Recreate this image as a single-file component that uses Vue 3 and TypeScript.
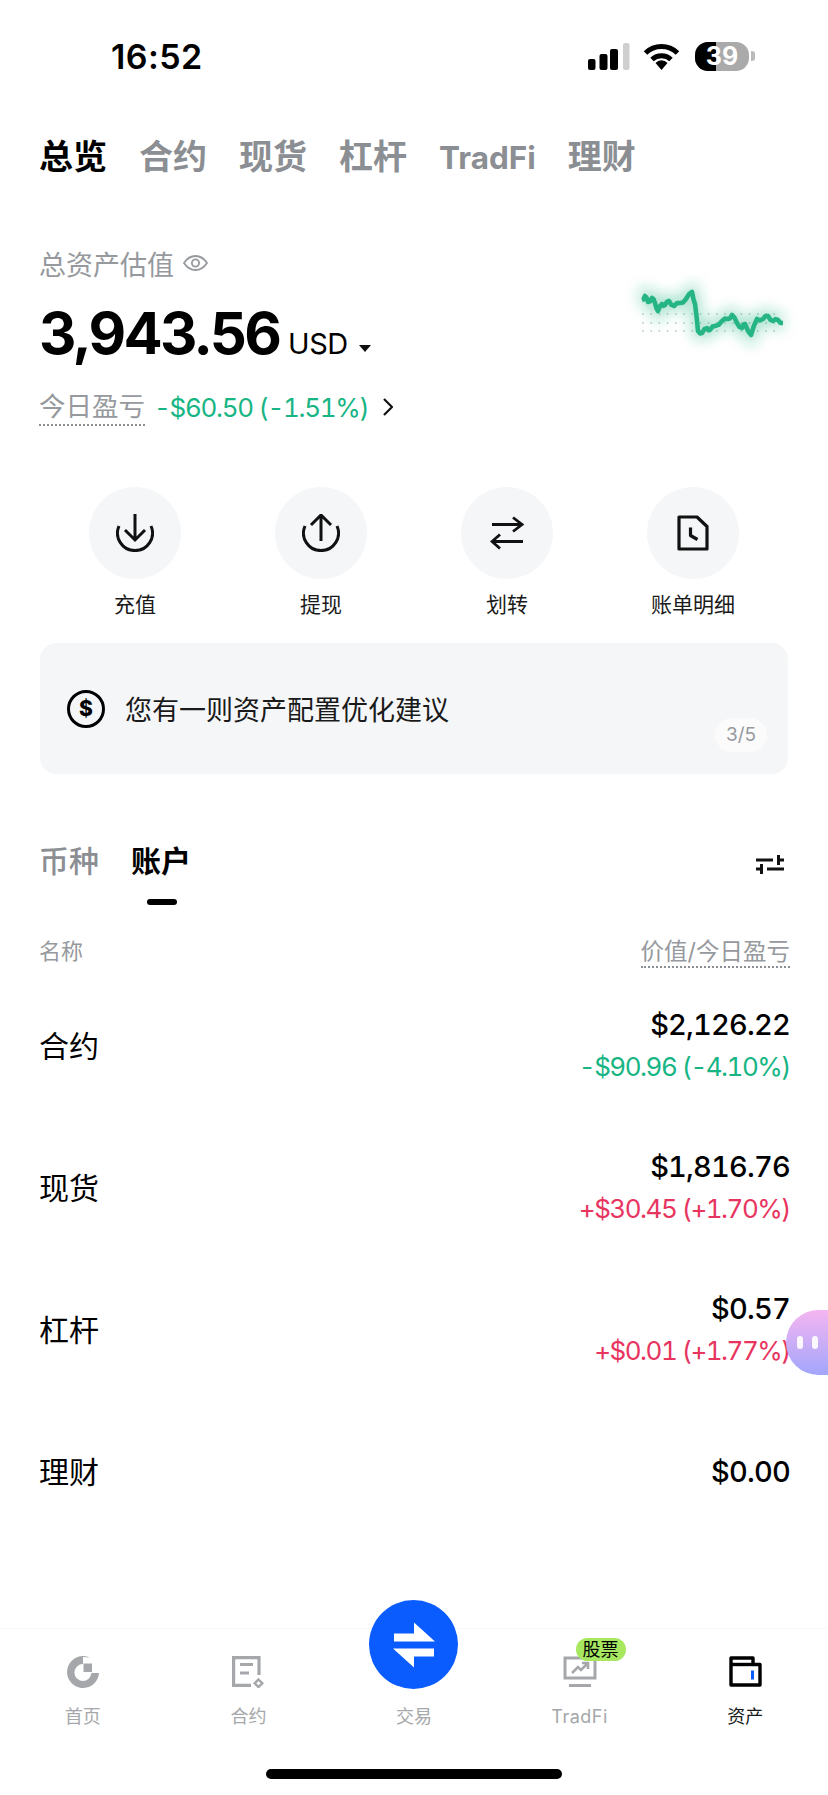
<template>
  <div class="page">
    <!-- 状态栏 -->
    <div class="status-bar">
      <span class="time">16:52</span>
      <div class="status-icons">
        <svg class="signal" width="42" height="27" viewBox="0 0 42 27">
          <rect x="0" y="16" width="7.5" height="11" rx="2" fill="#000" />
          <rect x="11.5" y="11" width="8" height="16" rx="2" fill="#000" />
          <rect x="22" y="6" width="8" height="21" rx="2" fill="#000" />
          <rect x="35" y="0" width="6.5" height="27" rx="2" fill="#cfcfcf" />
        </svg>
        <svg class="wifi" width="37" height="27" viewBox="0 0 37 27">
          <path d="M2.5 10A23 23 0 0 1 34.5 10" fill="none" stroke="#000" stroke-width="5" />
          <path d="M9 16.5A14 14 0 0 1 28 16.5" fill="none" stroke="#000" stroke-width="5" />
          <path d="M18.5 27l-6-7a8 8 0 0 1 12 0z" fill="#000" />
        </svg>
        <div class="battery">
          <div class="battery-body">
            <div class="battery-fill"></div>
            <span class="battery-text">39</span>
          </div>
          <div class="battery-nub"></div>
        </div>
      </div>
    </div>

    <!-- 顶部分类 -->
    <nav class="top-tabs">
      <span
        v-for="(tab, i) in topTabs"
        :key="tab"
        class="top-tab"
        :class="{ 'top-tab--active': i === 0, 'top-tab--latin': tab === 'TradFi' }"
      >{{ tab }}</span>
    </nav>

    <!-- 总资产 -->
    <section class="hero">
      <div class="hero-left">
        <div class="hero-title">
          <span>总资产估值</span>
          <svg width="25" height="16" viewBox="0 0 25 16" fill="none" stroke="#96999d" stroke-width="1.8">
            <path d="M1 8C4 3.4 8 1 12.5 1S21 3.4 24 8C21 12.6 17 15 12.5 15S4 12.6 1 8Z" />
            <circle cx="12.5" cy="8" r="3.6" />
          </svg>
        </div>
        <div class="hero-amount">
          <span class="amount">3,943.56</span>
          <span class="currency">USD</span>
          <i class="caret"></i>
        </div>
        <div class="hero-pnl">
          <span class="pnl-label">今日盈亏</span>
          <span class="pnl-value">-$60.50 (-1.51%)</span>
          <svg width="10" height="18" viewBox="0 0 10 18" fill="none" stroke="#111" stroke-width="2.2">
            <path d="M1 1l8 8-8 8" />
          </svg>
        </div>
      </div>
      <svg class="spark" width="228" height="90" viewBox="0 0 228 90">
        <defs>
          <filter id="glow" x="-30%" y="-60%" width="160%" height="220%">
            <feGaussianBlur stdDeviation="7" />
          </filter>
        </defs>
        <circle v-for="d in sparkDots" :key="d.key" :cx="d.x" :cy="d.y" r="0.9" fill="#b5d2c7" />
        <path :d="sparkPath" fill="none" stroke="#25b483" stroke-opacity="0.4" stroke-width="12" filter="url(#glow)" />
        <path :d="sparkPath" fill="none" stroke="#25b483" stroke-width="4.6" stroke-linejoin="round" />
      </svg>
    </section>

    <!-- 快捷操作 -->
    <section class="actions">
      <div class="action">
        <div class="action-icon">
          <svg width="38" height="38" viewBox="0 0 38 38" fill="none" stroke="#111" stroke-width="3">
            <path d="M3 12A17.5 17.5 0 1 0 35 12" />
            <path d="M19 0V26M9 16l10 10 10-10" />
          </svg>
        </div>
        <span>充值</span>
      </div>
      <div class="action">
        <div class="action-icon">
          <svg width="38" height="38" viewBox="0 0 38 38" fill="none" stroke="#111" stroke-width="3">
            <path d="M3 12A17.5 17.5 0 1 0 35 12" />
            <path d="M19 27V2M9 11l10-10 10 10" />
          </svg>
        </div>
        <span>提现</span>
      </div>
      <div class="action">
        <div class="action-icon">
          <svg width="34" height="34" viewBox="0 0 34 34" fill="none" stroke="#111" stroke-width="2.8">
            <path d="M2 8.5H32M23 1.5l9 7-9 7" />
            <path d="M33 25.5H2M10 18.5l-8 7 8 7" />
          </svg>
        </div>
        <span>划转</span>
      </div>
      <div class="action">
        <div class="action-icon">
          <svg width="32" height="36" viewBox="0 0 32 36" fill="none" stroke="#111" stroke-width="3.2" stroke-linejoin="round">
            <path d="M2 2H20L30 11.5V34H2Z" />
            <path d="M13.5 12.5V20.5L20.5 24.5" />
          </svg>
        </div>
        <span>账单明细</span>
      </div>
    </section>

    <!-- 资产建议 -->
    <section class="notice">
      <span class="notice-icon">$</span>
      <span class="notice-text">您有一则资产配置优化建议</span>
      <span class="notice-page">3/5</span>
    </section>

    <!-- 列表切换 -->
    <section class="list-tabs">
      <span class="list-tab">币种</span>
      <div class="list-tab list-tab--active">
        <span>账户</span>
        <i class="list-tab-bar"></i>
      </div>
      <svg class="filter" width="28" height="19" viewBox="0 0 28 19" fill="none" stroke="#111" stroke-width="3">
        <path d="M0 5H17M22.5 0V10M22.5 5H28" />
        <path d="M0 14H5.5M5.5 9V19M11 14H28" />
      </svg>
    </section>

    <div class="list-head">
      <span>名称</span>
      <span class="list-head-right">价值/今日盈亏</span>
    </div>

    <div class="list">
      <div v-for="row in rows" :key="row.name" class="row">
        <span class="row-name">{{ row.name }}</span>
        <div class="row-right">
          <span class="row-value">{{ row.value }}</span>
          <span v-if="row.pnl" class="row-pnl" :class="row.up ? 'is-up' : 'is-down'">{{ row.pnl }}</span>
        </div>
      </div>
    </div>

    <!-- 悬浮球 -->
    <div class="bubble">
      <i></i>
      <i></i>
    </div>

    <!-- 底部导航 -->
    <footer class="tabbar">
      <div class="tabbar-items">
        <div class="tab-item">
          <div class="tab-icon">
            <svg width="32" height="32" viewBox="0 0 32 32" fill="#a5a7aa">
              <path d="M23 1.6A16 16 0 1 0 32 17H24.4A8.5 8.5 0 1 1 16 8V1L23 1.6Z" />
              <rect x="16.5" y="7.5" width="8.5" height="8.5" />
            </svg>
          </div>
          <span>首页</span>
        </div>
        <div class="tab-item">
          <div class="tab-icon">
            <svg width="32" height="32" viewBox="0 0 32 32" fill="none" stroke="#a5a7aa" stroke-width="3.2">
              <path d="M27 19V1.6H1.6V29.4H19" />
              <path d="M8 8.5H21M8 17H17" />
              <path d="M26.5 23.5l3.8 3.8-3.8 3.8-3.8-3.8z" stroke-width="2.4" />
            </svg>
          </div>
          <span>合约</span>
        </div>
        <div class="tab-item">
          <div class="trade-btn">
            <svg width="44" height="46" viewBox="0 0 44 46" fill="#fff">
              <path d="M2 11.5H22V.5L43 19.5H2Z" />
              <path d="M42 34.5H22V45.5L1 26.5H42Z" />
            </svg>
          </div>
          <div class="tab-icon"></div>
          <span>交易</span>
        </div>
        <div class="tab-item">
          <div class="tab-icon">
            <svg width="34" height="32" viewBox="0 0 34 32" fill="none" stroke="#a5a7aa" stroke-width="3">
              <path d="M32 3V22H2V2H20" />
              <path d="M6 29.5H28" />
              <path d="M9 17l6-6 3 3 6-6M19 7h6v6" stroke-width="2.6" />
            </svg>
            <span class="tab-badge">股票</span>
          </div>
          <span class="tab-latin">TradFi</span>
        </div>
        <div class="tab-item tab-item--active">
          <div class="tab-icon">
            <svg width="33" height="31" viewBox="0 0 33 31" fill="none" stroke="#000" stroke-width="3.4" stroke-linejoin="round">
              <path d="M2 2H24V8.5H31V29H2Z" />
              <path d="M2 8.5H24" />
              <rect x="22" y="14.5" width="3" height="9" fill="#0a5cff" stroke="none" />
            </svg>
          </div>
          <span>资产</span>
        </div>
      </div>
      <div class="home-bar"></div>
    </footer>
  </div>
</template>

<script setup lang="ts">
import { computed } from "vue";

interface AccountRow {
  name: string;
  value: string;
  pnl?: string;
  up?: boolean;
}

const topTabs = ["总览", "合约", "现货", "杠杆", "TradFi", "理财"];

const rows: AccountRow[] = [
  { name: "合约", value: "$2,126.22", pnl: "-$90.96 (-4.10%)", up: false },
  { name: "现货", value: "$1,816.76", pnl: "+$30.45 (+1.70%)", up: true },
  { name: "杠杆", value: "$0.57", pnl: "+$0.01 (+1.77%)", up: true },
  { name: "理财", value: "$0.00" },
];

// 折线关键点
const sparkPoints: [number, number][] = [
  [42, 29], [45, 25], [48, 31], [52, 27], [55, 32], [58, 40], [62, 33], [65, 34],
  [69, 30], [74, 35], [80, 32], [86, 28], [92, 21], [95, 33], [98, 60], [102, 62],
  [107, 57], [110, 59], [115, 55], [122, 50], [128, 48], [132, 44], [137, 52],
  [142, 57], [145, 53], [151, 64], [157, 48], [163, 48], [168, 45], [173, 50],
  [178, 49], [183, 52],
];

const sparkPath = computed(() => {
  const out: string[] = [];
  sparkPoints.forEach(([x, y], i) => {
    if (i > 0) {
      const [px, py] = sparkPoints[i - 1];
      out.push(`L${(px + x) / 2} ${(py + y) / 2 + (i % 2 ? 1.4 : -1.4)}`);
    }
    out.push(`${i === 0 ? "M" : "L"}${x} ${y}`);
  });
  return out.join("");
});

const sparkDots = computed(() => {
  const dots: { key: string; x: number; y: number }[] = [];
  for (const y of [43, 52, 60]) {
    for (let x = 43; x <= 182; x += 8.2) {
      dots.push({ key: `${x}-${y}`, x, y });
    }
  }
  return dots;
});
</script>

<style>
html,
body {
  margin: 0;
  background: #fff;
}
</style>

<style scoped>
.page {
  position: relative;
  display: flex;
  flex-direction: column;
  width: 828px;
  height: 1795px;
  overflow: hidden;
  background: #fff;
  color: #000;
  font-family: Inter, "Noto Sans CJK SC", sans-serif;
}

/* 状态栏 */
.status-bar {
  display: flex;
  align-items: center;
  justify-content: space-between;
  height: 112px;
  padding: 0 73px 0 111px;
  box-sizing: border-box;
}

.time {
  font-size: 34px;
  font-weight: 600;
  letter-spacing: 0.4px;
}

.status-icons {
  display: flex;
  align-items: center;
}

.wifi {
  margin-left: 13px;
}

.battery {
  display: flex;
  align-items: center;
  margin-left: 15px;
}

.battery-body {
  position: relative;
  display: flex;
  width: 54px;
  height: 29px;
  overflow: hidden;
  border-radius: 13px;
  background: #aaa;
}

.battery-fill {
  width: 21px;
  background: #000;
}

.battery-text {
  position: absolute;
  inset: 0;
  text-align: center;
  font-size: 25px;
  line-height: 29px;
  font-weight: 700;
  color: #fff;
}

.battery-nub {
  width: 4px;
  height: 10px;
  margin-left: 2px;
  border-radius: 0 3px 3px 0;
  background: #bbb;
}

/* 顶部分类 */
.top-tabs {
  display: flex;
  align-items: baseline;
  gap: 32px;
  height: 88px;
  padding-left: 39px;
  line-height: 90px;
}

.top-tab {
  font-size: 34px;
  font-weight: 700;
  color: #8b8e92;
}

.top-tab--latin {
  font-size: 31.5px;
}

.top-tab--active {
  color: #000;
}

/* 总资产 */
.hero {
  display: flex;
  justify-content: space-between;
  padding: 43px 0 0 39px;
}

.hero-title {
  display: flex;
  align-items: center;
  gap: 9px;
  height: 40px;
  font-size: 27px;
  color: #96999d;
}

.hero-amount {
  display: flex;
  align-items: baseline;
  margin-top: 15px;
  height: 70px;
  line-height: 70px;
}

.amount {
  font-size: 58px;
  font-weight: 700;
  letter-spacing: -2.7px;
}

.currency {
  margin-left: 9px;
  font-size: 29px;
  letter-spacing: -0.5px;
}

.caret {
  align-self: center;
  width: 0;
  height: 0;
  margin: 30px 0 0 11px;
  border-left: 6px solid transparent;
  border-right: 6px solid transparent;
  border-top: 7px solid #111;
}

.hero-pnl {
  display: flex;
  align-items: center;
  height: 40px;
  margin-top: 19px;
}

.pnl-label {
  font-size: 26.5px;
  line-height: 36px;
  color: #96999d;
  border-bottom: 2px dotted #8b8e92;
}

.pnl-value {
  margin: 0 15px 0 9px;
  font-size: 26px;
  letter-spacing: -1.3px;
  font-variant-numeric: tabular-nums;
  color: #17b584;
}

.spark {
  margin-top: 28px;
}

/* 快捷操作 */
.actions {
  display: grid;
  grid-template-columns: repeat(4, 186px);
  padding: 60px 0 0 42px;
}

.action {
  display: flex;
  flex-direction: column;
  align-items: center;
  font-size: 21px;
  line-height: 30px;
  color: #1a1a1a;
}

.action-icon {
  display: flex;
  align-items: center;
  justify-content: center;
  width: 92px;
  height: 92px;
  margin-bottom: 11px;
  border-radius: 50%;
  background: #f4f6f7;
}

/* 资产建议 */
.notice {
  position: relative;
  display: flex;
  align-items: center;
  height: 131px;
  margin: 23px 40px 0 40px;
  padding-left: 27px;
  border-radius: 16px;
  background: #f5f6f7;
}

.notice-icon {
  display: flex;
  align-items: center;
  justify-content: center;
  box-sizing: border-box;
  width: 38px;
  height: 38px;
  border: 3.5px solid #000;
  border-radius: 50%;
  font-size: 21px;
  font-weight: 800;
}

.notice-text {
  margin-left: 20px;
  font-size: 27px;
  color: #1a1a1a;
}

.notice-page {
  position: absolute;
  right: 21px;
  bottom: 22px;
  width: 52px;
  height: 34px;
  border-radius: 17px;
  background: #fbfbfc;
  text-align: center;
  font-size: 19px;
  line-height: 34px;
  color: #96999d;
}

/* 列表切换 */
.list-tabs {
  display: flex;
  align-items: flex-start;
  gap: 32px;
  height: 64px;
  margin-top: 67px;
  padding: 0 44px 0 39px;
}

.list-tab {
  display: flex;
  flex-direction: column;
  align-items: center;
  font-size: 30px;
  line-height: 40px;
  font-weight: 500;
  color: #8b8e92;
}

.list-tab--active {
  font-weight: 700;
  color: #000;
}

.list-tab-bar {
  width: 30px;
  height: 6px;
  margin: 18px 0 0 2px;
  border-radius: 3px;
  background: #000;
}

.filter {
  margin: 14px 0 0 auto;
}

.list-head {
  display: flex;
  justify-content: space-between;
  margin-top: 32px;
  padding: 0 38px 0 39px;
  font-size: 22px;
  line-height: 29px;
  color: #96999d;
}

.list-head-right {
  font-size: 23.5px;
  border-bottom: 2px dotted #8b8e92;
}

/* 账户列表 */
.list {
  flex: 1;
  margin-top: 7px;
  padding: 0 38px 0 39px;
}

.row {
  display: flex;
  align-items: center;
  justify-content: space-between;
  height: 142px;
}

.row-name {
  margin-bottom: 4px;
  font-size: 30px;
}

.row-right {
  display: flex;
  flex-direction: column;
  align-items: flex-end;
  font-variant-numeric: tabular-nums;
}

.row-value {
  font-size: 29px;
  line-height: 42px;
  font-weight: 500;
  letter-spacing: -0.8px;
}

.row-pnl {
  font-size: 26px;
  line-height: 42px;
  letter-spacing: -1.5px;
}

.is-up {
  color: #e8355f;
}

.is-down {
  color: #17b584;
}

/* 悬浮球 */
.bubble {
  position: absolute;
  top: 1310px;
  right: 0;
  display: flex;
  gap: 9px;
  align-items: center;
  width: 42px;
  height: 65px;
  padding-left: 11px;
  box-sizing: border-box;
  border-radius: 33px 0 0 33px;
  background: linear-gradient(180deg, #f5b5f1, #a2a6fc);
}

.bubble i {
  width: 6px;
  height: 13px;
  border-radius: 3px;
  background: #fff;
  opacity: 0.9;
}

/* 底部导航 */
.tabbar {
  border-top: 1px solid #f8f8f9;
  background: #fff;
}

.tabbar-items {
  display: grid;
  grid-template-columns: repeat(5, 1fr);
}

.tab-item {
  position: relative;
  display: flex;
  flex-direction: column;
  align-items: center;
  padding-top: 27px;
  font-size: 18px;
  line-height: 26px;
  color: #a5a7aa;
}

.tab-latin {
  letter-spacing: 0.5px;
}

.tab-item--active {
  color: #1a1a1a;
}

.tab-icon {
  position: relative;
  height: 32px;
  margin-bottom: 16px;
}

.tab-badge {
  position: absolute;
  top: -18px;
  left: 13px;
  width: 50px;
  height: 23px;
  border-radius: 12px;
  background: #a8e860;
  text-align: center;
  font-size: 18px;
  line-height: 23px;
  color: #000;
}

.trade-btn {
  position: absolute;
  top: -29px;
  left: 50%;
  display: flex;
  align-items: center;
  justify-content: center;
  width: 89px;
  height: 89px;
  margin-left: -44.5px;
  border-radius: 50%;
  background: #0a5cff;
}

.home-bar {
  width: 296px;
  height: 10px;
  margin: 39px auto 16px;
  border-radius: 5px;
  background: #000;
}
</style>
